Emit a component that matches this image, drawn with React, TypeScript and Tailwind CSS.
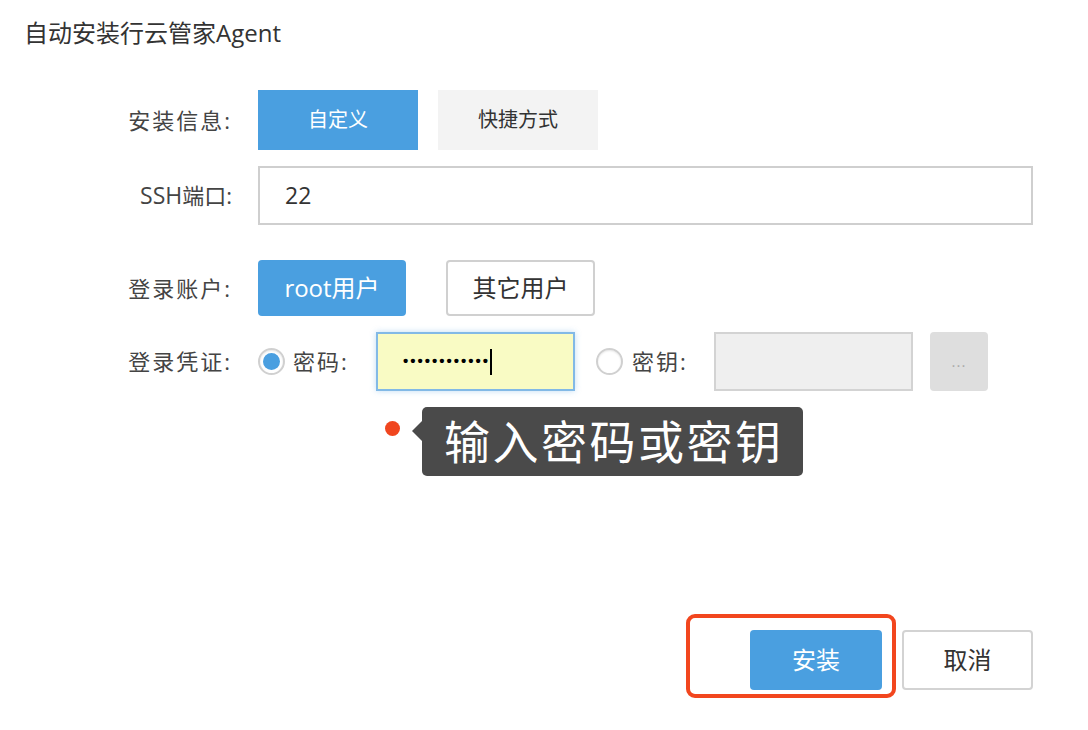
import { FunctionComponent, ReactNode } from "react";

const FONT = { fontFamily: '"Open Sans", "Noto Sans CJK SC", sans-serif' };

type RowProps = {
  label: ReactNode;
  className?: string;
  children: ReactNode;
};

const FormRow: FunctionComponent<RowProps> = ({ label, className, children }) => (
  <div className={`flex items-center ${className ?? ""}`}>
    <div className="w-[232px] text-right text-[22px] text-[#444] tracking-[2px]">
      {label}
    </div>
    <div className="ml-[26px] flex items-center h-full">{children}</div>
  </div>
);

const Radio: FunctionComponent<{ checked?: boolean }> = ({ checked }) => (
  <div className="w-[27px] h-[27px] rounded-full border-2 border-[#d0d0d0] bg-white flex items-center justify-center shadow-[inset_0_1px_2px_rgba(0,0,0,0.1)]">
    {checked && <div className="w-[17px] h-[17px] rounded-full bg-[#4a9fe0]" />}
  </div>
);

const App: FunctionComponent = () => {
  return (
    <div
      className="relative w-[1088px] h-[730px] bg-white flex flex-col text-[#333] overflow-hidden"
      style={FONT}
    >
      <div className="pl-[24px] pt-[19px] text-[24px] leading-[28px] text-[#333]">
        自动安装行云管家Agent
      </div>

      <FormRow label="安装信息:" className="mt-[43px] h-[60px]">
        <div className="w-[160px] h-[60px] bg-[#4a9fe0] text-white text-[20px] flex items-center justify-center">
          自定义
        </div>
        <div className="ml-[20px] w-[160px] h-[60px] bg-[#f3f3f3] text-[#333] text-[20px] flex items-center justify-center">
          快捷方式
        </div>
      </FormRow>

      <FormRow
        label={
          <span className="tracking-normal">
            <span className="text-[23px]">SSH</span>端口:
          </span>
        }
        className="mt-[16px] h-[59px]"
      >
        <div className="w-[775px] h-[59px] border-2 border-[#cfcfcf] flex items-center pl-[25px] text-[23px] text-[#333]">
          22
        </div>
      </FormRow>

      <FormRow label="登录账户:" className="mt-[35px] h-[56px]">
        <div className="w-[148px] h-[56px] rounded-[4px] bg-[#4a9fe0] text-white text-[24px] flex items-center justify-center">
          root用户
        </div>
        <div className="ml-[40px] w-[149px] h-[56px] rounded-[4px] border-2 border-[#d0d0d0] bg-white text-[24px] text-[#333] flex items-center justify-center">
          其它用户
        </div>
      </FormRow>

      <FormRow label="登录凭证:" className="mt-[16px] h-[59px]">
        <Radio checked />
        <span className="ml-[8px] w-[83px] text-[22px] tracking-[2px] text-[#444]">密码:</span>
        <div className="w-[199px] h-[59px] border-2 border-[#82b9e6] bg-[#f9fbc4] shadow-[0_0_6px_rgba(74,159,224,0.35)] flex items-center pl-[25px]">
          <span
            className="text-[15px] tracking-[2px] text-black font-bold"
            style={{ fontFamily: '"Liberation Sans", sans-serif' }}
          >
            ••••••••••••
          </span>
          <span className="w-[2px] h-[26px] bg-black" />
        </div>
        <div className="ml-[21px]">
          <Radio />
        </div>
        <span className="ml-[9px] w-[82px] text-[22px] tracking-[2px] text-[#444]">密钥:</span>
        <div className="w-[199px] h-[59px] border-2 border-[#d3d3d3] bg-[#efefef]" />
        <div className="ml-[17px] w-[58px] h-[59px] rounded-[4px] bg-[#dedede] text-[#aaa] text-[15px] tracking-[1px] flex items-center justify-center">
          ...
        </div>
      </FormRow>

      <div className="mt-auto mb-[40px] mr-[55px] flex justify-end gap-[20px]">
        <div className="w-[132px] h-[60px] rounded-[4px] bg-[#4a9fe0] text-white text-[24px] flex items-center justify-center">
          安装
        </div>
        <div className="w-[131px] h-[60px] rounded-[4px] border-2 border-[#d3d3d3] bg-white text-[24px] text-[#333] flex items-center justify-center">
          取消
        </div>
      </div>

      {/* tooltip hint */}
      <div className="absolute left-[385px] top-[407px] flex items-start">
        <div className="mt-[14px] w-[15px] h-[15px] rounded-full bg-[#f0461f]" />
        <div className="relative ml-[22px] h-[69px] w-[381px] rounded-[5px] bg-[#4a4a4a] flex items-center pl-[22px] text-white text-[46px] tracking-[2.5px]">
          <div className="absolute -left-[10px] top-[14px] w-0 h-0 border-y-[10px] border-y-transparent border-r-[10px] border-r-[#4a4a4a]" />
          输入密码或密钥
        </div>
      </div>

      {/* highlight frame */}
      <div className="absolute left-[686px] top-[614px] w-[210px] h-[84px] rounded-[9px] border-[4px] border-[#f2461e]" />
    </div>
  );
};

export default App;
